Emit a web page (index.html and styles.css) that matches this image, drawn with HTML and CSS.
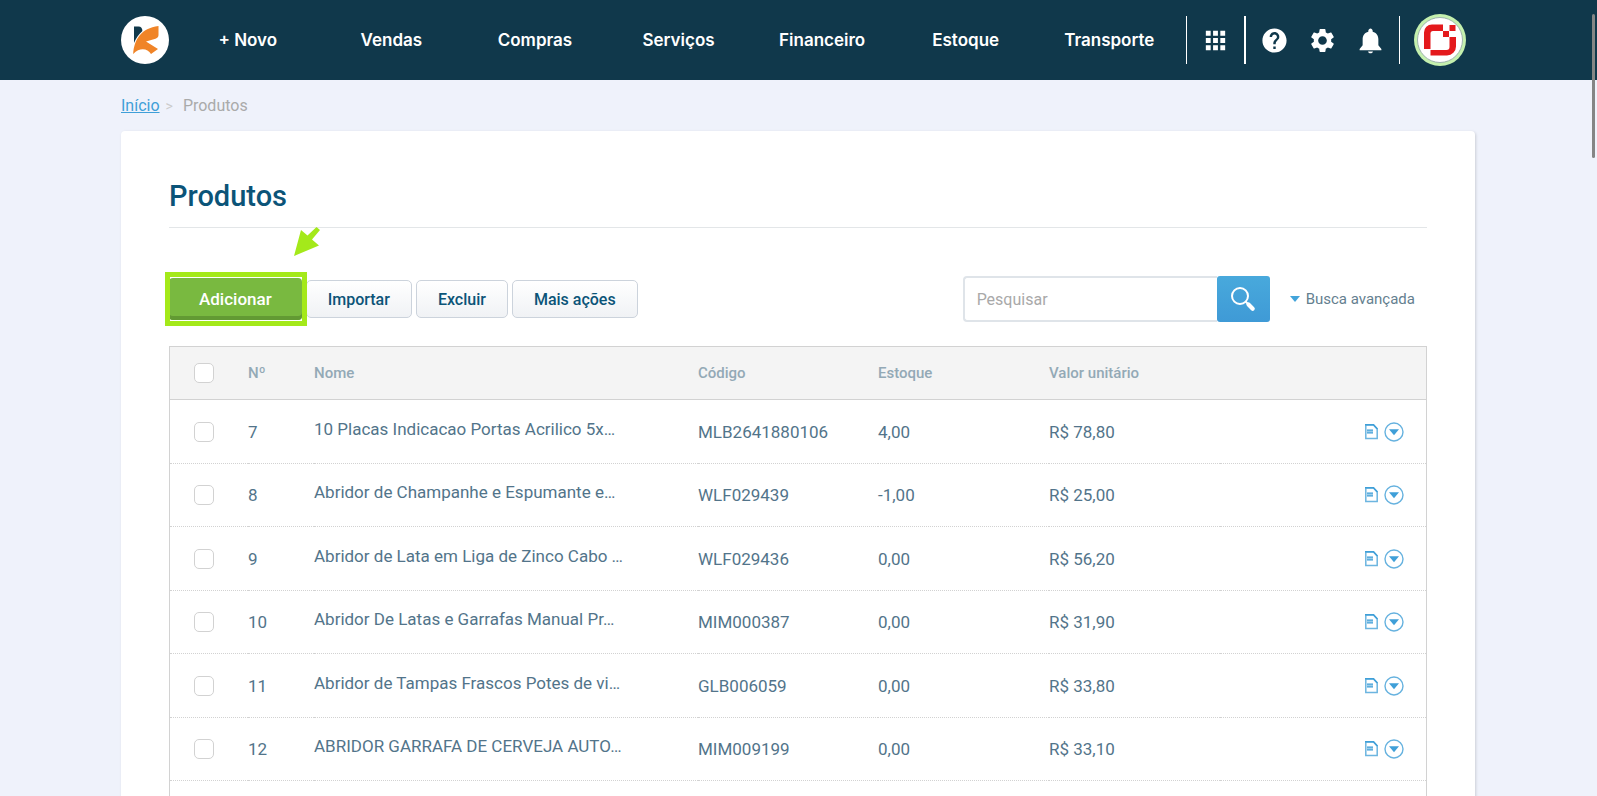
FILE: index.html
```html
<!DOCTYPE html>
<html lang="pt-BR">

<head>
    <meta charset="UTF-8">
    <meta name="viewport" content="width=device-width, initial-scale=1.0">
    <title>Produtos</title>
    <link rel="stylesheet" href="styles.css">
</head>

<body>
    <!-- icons used by every table row -->
    <svg class="sprite" aria-hidden="true">
        <symbol id="doc" viewBox="0 0 13 16">
            <path d="M.8 1h7.700l3.700 4v9.500H.8z" fill="#fff" stroke="#6cb5e0" stroke-width="1.500" />
            <path d="M0 .8h8.500l4 4.200" fill="none" stroke="#3f9fd8" stroke-width="1.500" />
            <path d="M2 5h6v5H2z" fill="#9ccdeb" />
            <path d="M2 6.500h6M2 8.500h6" stroke="#5fafde" stroke-width="1" />
        </symbol>
        <symbol id="more" viewBox="0 0 20 20">
            <circle cx="10" cy="10" r="9" fill="none" stroke="#66b2df" stroke-width="1.400" />
            <path d="M5 7.200h10l-5 6z" fill="#3f9fd8" />
        </symbol>
    </svg>

    <header class="topbar">
        <a class="logo" href="#" aria-label="Início">
            <svg viewBox="0 0 48 48">
                <circle cx="24" cy="24" r="24" fill="#fff" />
                <path d="M13 10.500h4.500c2.500 0 4 2 3.900 4.500C18 18 15 22 13 27z" fill="#10384b" />
                <path d="M37.500 10v9c0 2-1 3-3 3.700L25 25.500l12 7.500-7 5c-3.500-5.500-11-7-17.800 0C13 24 20 12 37.500 10z" fill="#f08427" />
            </svg>
        </a>
        <nav class="menu">
            <a href="#">+ Novo</a>
            <a href="#">Vendas</a>
            <a href="#">Compras</a>
            <a href="#">Serviços</a>
            <a href="#">Financeiro</a>
            <a href="#">Estoque</a>
            <a href="#">Transporte</a>
        </nav>
        <div class="tools">
            <button class="apps" type="button" aria-label="Aplicativos">
                <svg viewBox="0 0 24 24"><path d="M4 8h4V4H4v4zm6 12h4v-4h-4v4zm-6 0h4v-4H4v4zm0-6h4v-4H4v4zm6 0h4v-4h-4v4zm6-10v4h4V4h-4zm-6 4h4V4h-4v4zm6 6h4v-4h-4v4zm0 6h4v-4h-4v4z" /></svg>
            </button>
            <div class="group">
                <button type="button" aria-label="Ajuda">
                    <svg viewBox="0 0 24 24"><path d="M12 2C6.480 2 2 6.480 2 12s4.480 10 10 10 10-4.480 10-10S17.520 2 12 2zm1 17h-2v-2h2v2zm2.070-7.750l-.9.920C13.450 12.900 13 13.500 13 15h-2v-.5c0-1.100.45-2.100 1.170-2.830l1.240-1.260c.37-.36.59-.86.59-1.410 0-1.100-.9-2-2-2s-2 .9-2 2H8c0-2.210 1.790-4 4-4s4 1.790 4 4c0 .88-.36 1.680-.93 2.250z" /></svg>
                </button>
                <button type="button" aria-label="Configurações">
                    <svg viewBox="0 0 24 24"><path d="M19.140 12.940c.04-.3.06-.61.06-.94 0-.32-.02-.64-.07-.94l2.030-1.580c.18-.14.23-.41.12-.61l-1.920-3.320c-.12-.22-.37-.29-.59-.22l-2.390.96c-.5-.38-1.030-.7-1.620-.94l-.36-2.540c-.04-.24-.24-.41-.48-.41h-3.840c-.24 0-.43.17-.47.41l-.36 2.540c-.59.24-1.130.57-1.620.94l-2.390-.96c-.22-.08-.47 0-.59.22L2.740 8.870c-.12.21-.08.47.12.61l2.030 1.580c-.05.3-.09.63-.09.94s.02.64.07.94l-2.030 1.580c-.18.14-.23.41-.12.61l1.920 3.320c.12.22.37.29.59.22l2.390-.96c.5.38 1.030.7 1.620.94l.36 2.540c.05.24.24.41.48.41h3.840c.24 0 .44-.17.47-.41l.36-2.540c.59-.24 1.130-.56 1.620-.94l2.390.96c.22.08.47 0 .59-.22l1.920-3.320c.12-.22.07-.47-.12-.61l-2.010-1.580zM12 15.600c-1.980 0-3.600-1.620-3.600-3.600s1.620-3.600 3.600-3.600 3.600 1.620 3.600 3.600-1.620 3.600-3.600 3.600z" /></svg>
                </button>
                <button type="button" aria-label="Notificações">
                    <svg viewBox="0 0 24 24"><path d="M12 22.500c1.100 0 2-.7 2-1.500h-4c0 .8.900 1.500 2 1.500zm6.500-6.500v-5c0-3.070-1.640-5.640-4.700-6.320V4c0-.83-.97-2-1.800-2s-1.800 1.170-1.800 2v.68C7.130 5.360 5.500 7.920 5.500 11v5L3 19v1h18v-1l-2.500-3z" /></svg>
                </button>
            </div>
            <a class="avatar" href="#" aria-label="Minha conta">
                <svg viewBox="0 0 52 52">
                    <circle cx="26" cy="26" r="26" fill="#c4f0ae" />
                    <circle cx="26" cy="26" r="22.500" fill="#fff" stroke="#9fb4ae" stroke-width="1" />
                    <path d="M29 10.500H18a8 8 0 0 0-8 8V35h6.500V19.500q0-2.500 2.500-2.500h10z" fill="#e4191c" />
                    <path d="M16.500 36v5.500H33a9 9 0 0 0 9-9V23h-6.500v10q0 3-3 3z" fill="#e4191c" />
                    <path d="M29 17h6v6h-6zM35.500 11h6v6h-6z" fill="#e4191c" />
                </svg>
            </a>
        </div>
    </header>

    <div class="breadcrumb">
        <a href="#">Início</a><span class="sep">&gt;</span><span>Produtos</span>
    </div>

    <main class="card">
        <h1>Produtos</h1>

        <div class="toolbar">
            <div class="actions">
                <div class="highlight">
                    <button class="btn-add" type="button">Adicionar</button>
                    <svg class="arrow" viewBox="0 0 26 29" aria-hidden="true"><path d="M0 29L7 3l6.500 5.500L22.500 0l3.500 3-8 9.500 7 6z" fill="#a4e91a" /></svg>
                </div>
                <button class="btn" type="button">Importar</button>
                <button class="btn" type="button">Excluir</button>
                <button class="btn" type="button">Mais ações</button>
            </div>
            <form class="search">
                <input type="text" placeholder="Pesquisar" aria-label="Pesquisar">
                <button type="button" aria-label="Buscar">
                    <svg viewBox="0 0 26 26">
                        <circle cx="10" cy="10" r="8" fill="none" stroke="#fff" stroke-width="2" />
                        <path d="M15.500 15.500l2 2" stroke="#fff" stroke-width="2" />
                        <path d="M18.500 18.500l4.200 4.200" stroke="#fff" stroke-width="4.200" stroke-linecap="round" />
                    </svg>
                </button>
                <a href="#">Busca avançada</a>
            </form>
        </div>

        <table class="products">
            <colgroup>
                <col class="col-check">
                <col class="col-num">
                <col class="col-name">
                <col class="col-code">
                <col class="col-stock">
                <col class="col-price">
                <col>
            </colgroup>
            <thead>
                <tr>
                    <th class="check"><input type="checkbox" aria-label="Selecionar todos"></th>
                    <th>Nº</th>
                    <th>Nome</th>
                    <th>Código</th>
                    <th>Estoque</th>
                    <th>Valor unitário</th>
                    <th></th>
                </tr>
            </thead>
            <tbody>
                <tr>
                    <td class="check"><input type="checkbox" aria-label="Selecionar 7"></td>
                    <td>7</td>
                    <td class="name">10 Placas Indicacao Portas Acrilico 5x…</td>
                    <td>MLB2641880106</td>
                    <td>4,00</td>
                    <td>R$ 78,80</td>
                    <td><div class="icons"><button type="button" aria-label="Detalhes"><svg class="doc"><use href="#doc" /></svg></button><button type="button" aria-label="Opções"><svg class="more"><use href="#more" /></svg></button></div></td>
                </tr>
                <tr>
                    <td class="check"><input type="checkbox" aria-label="Selecionar 8"></td>
                    <td>8</td>
                    <td class="name">Abridor de Champanhe e Espumante e…</td>
                    <td>WLF029439</td>
                    <td>-1,00</td>
                    <td>R$ 25,00</td>
                    <td><div class="icons"><button type="button" aria-label="Detalhes"><svg class="doc"><use href="#doc" /></svg></button><button type="button" aria-label="Opções"><svg class="more"><use href="#more" /></svg></button></div></td>
                </tr>
                <tr>
                    <td class="check"><input type="checkbox" aria-label="Selecionar 9"></td>
                    <td>9</td>
                    <td class="name">Abridor de Lata em Liga de Zinco Cabo …</td>
                    <td>WLF029436</td>
                    <td>0,00</td>
                    <td>R$ 56,20</td>
                    <td><div class="icons"><button type="button" aria-label="Detalhes"><svg class="doc"><use href="#doc" /></svg></button><button type="button" aria-label="Opções"><svg class="more"><use href="#more" /></svg></button></div></td>
                </tr>
                <tr>
                    <td class="check"><input type="checkbox" aria-label="Selecionar 10"></td>
                    <td>10</td>
                    <td class="name">Abridor De Latas e Garrafas Manual Pr…</td>
                    <td>MIM000387</td>
                    <td>0,00</td>
                    <td>R$ 31,90</td>
                    <td><div class="icons"><button type="button" aria-label="Detalhes"><svg class="doc"><use href="#doc" /></svg></button><button type="button" aria-label="Opções"><svg class="more"><use href="#more" /></svg></button></div></td>
                </tr>
                <tr>
                    <td class="check"><input type="checkbox" aria-label="Selecionar 11"></td>
                    <td>11</td>
                    <td class="name">Abridor de Tampas Frascos Potes de vi…</td>
                    <td>GLB006059</td>
                    <td>0,00</td>
                    <td>R$ 33,80</td>
                    <td><div class="icons"><button type="button" aria-label="Detalhes"><svg class="doc"><use href="#doc" /></svg></button><button type="button" aria-label="Opções"><svg class="more"><use href="#more" /></svg></button></div></td>
                </tr>
                <tr>
                    <td class="check"><input type="checkbox" aria-label="Selecionar 12"></td>
                    <td>12</td>
                    <td class="name">ABRIDOR GARRAFA DE CERVEJA AUTO…</td>
                    <td>MIM009199</td>
                    <td>0,00</td>
                    <td>R$ 33,10</td>
                    <td><div class="icons"><button type="button" aria-label="Detalhes"><svg class="doc"><use href="#doc" /></svg></button><button type="button" aria-label="Opções"><svg class="more"><use href="#more" /></svg></button></div></td>
                </tr>
                <tr>
                    <td colspan="7"></td>
                </tr>
            </tbody>
        </table>
    </main>

    <div class="scroll-thumb"></div>
</body>

</html>
```
FILE: styles.css
```css
* {
    box-sizing: border-box;
    margin: 0;
    padding: 0;
}

html,
body {
    height: 100%;
    overflow: hidden;
}

body {
    background-color: #eff2fb;
    color: #52748a;
    font-family: Roboto, "Liberation Sans", sans-serif;
    font-size: 17px;
}

button,
input {
    font-family: inherit;
}

button {
    border: none;
    background: none;
    cursor: pointer;
}

svg {
    display: block;
}

.sprite {
    display: none;
}

/* top bar */
.topbar {
    display: flex;
    align-items: center;
    height: 80px;
    padding: 0 122px 0 121px;
    background-color: #10384b;
}

.logo svg {
    width: 48px;
    height: 48px;
}

.menu {
    display: flex;
    flex: 1;
    padding: 0 5px 0 7px;
}

.menu a {
    flex: 1 1 0;
    color: #fff;
    font-family: Inter, sans-serif;
    font-size: 17px;
    font-weight: 600;
    text-align: center;
    text-decoration: none;
}

.tools,
.group {
    display: flex;
    align-items: center;
    height: 48px;
}

.tools {
    border-left: 1px solid #fff;
}

.group {
    padding: 0 5px 0 4px;
    border-left: 2px solid #fff;
    border-right: 1px solid #fff;
}

.tools button {
    display: flex;
    justify-content: center;
    width: 48px;
    fill: #fff;
}

.tools .apps {
    width: 57px;
}

.tools button svg {
    width: 29px;
    height: 29px;
}

.avatar {
    margin: 0 9px 0 14px;
}

.avatar svg {
    width: 52px;
    height: 52px;
}

.breadcrumb {
    display: flex;
    align-items: center;
    height: 51px;
    padding: 0 121px;
    color: #aaa;
    font-size: 16px;
}

.breadcrumb a {
    color: #3f9fd8;
}

.breadcrumb .sep {
    padding: 0 10px 0 6px;
    color: #ccc;
    font-size: 14px;
}

.card {
    margin: 0 122px 0 121px;
    padding: 48px 48px 0;
    border-radius: 4px;
    background-color: #fff;
    box-shadow: 1px 1px 3px rgba(0, 0, 0, 0.15);
}

h1 {
    padding-bottom: 14px;
    border-bottom: 1px solid #e3e6e8;
    color: #0b5478;
    font-size: 29px;
    font-weight: 500;
    line-height: 34px;
}

.toolbar {
    display: flex;
    align-items: center;
    justify-content: space-between;
    padding: 48px 0 24px;
}

.actions {
    display: flex;
    align-items: center;
    gap: 4px;
}

.highlight {
    position: relative;
}

/* bright frame around the add button */
.highlight::after {
    content: "";
    position: absolute;
    z-index: 1;
    inset: -6px -5px -6px -4px;
    border: 5px solid #a4e91a;
    pointer-events: none;
}

.arrow {
    position: absolute;
    left: 125px;
    bottom: 64px;
    width: 26px;
    height: 29px;
}

.btn-add {
    display: block;
    height: 42px;
    padding: 0 30px;
    border-radius: 4px;
    background-color: #79b940;
    box-shadow: inset 0 -4px #629a33;
    color: #fff;
    font-size: 17px;
    font-weight: 500;
}

.btn {
    height: 38px;
    padding: 0 21px;
    border: 1px solid #ccd3dc;
    border-radius: 5px;
    background-image: linear-gradient(#fff, #f0f2f5);
    color: #0b5478;
    font-size: 16px;
    font-weight: 500;
}

.search {
    display: flex;
    align-items: center;
}

.search input {
    width: 254px;
    height: 46px;
    padding: 0 12px;
    border: 2px solid #dfe4e9;
    border-right: none;
    border-radius: 4px 0 0 4px;
    font-size: 16px;
}

.search input::placeholder {
    color: #a9a9a9;
}

.search button {
    display: flex;
    align-items: center;
    justify-content: center;
    width: 53px;
    height: 46px;
    border-radius: 3px;
    background-image: linear-gradient(#48a9dc, #3f9ad6);
}

.search button svg {
    width: 26px;
    height: 26px;
}

.search a {
    display: flex;
    align-items: center;
    gap: 6px;
    margin: 0 12px 0 20px;
    color: #64808f;
    font-size: 15px;
    text-decoration: none;
}

.search a::before {
    content: "";
    border: 5px solid transparent;
    border-top: 6px solid #43a4da;
    border-bottom: none;
}

/* product list */
.products {
    width: 100%;
    border: 1px solid #d2d2d2;
    border-collapse: separate;
    border-spacing: 0;
    table-layout: fixed;
}

.col-check {
    width: 78px;
}

.col-num {
    width: 66px;
}

.col-name {
    width: 384px;
}

.col-code {
    width: 180px;
}

.col-stock,
.col-price {
    width: 171px;
}

.products th {
    height: 53px;
    border-bottom: 1px solid #d2d2d2;
    background-color: #f4f4f4;
    color: #93a9b6;
    font-size: 15px;
    font-weight: 500;
    text-align: left;
}

.products td {
    height: 64px;
    border-bottom: 1px dotted #d2d2d2;
    font-size: 17px;
    white-space: nowrap;
}

.products tr:nth-child(even) td {
    height: 63px;
}

.products .name {
    padding-bottom: 6px;
}

.products .check {
    padding-left: 24px;
}

.products input {
    display: block;
    appearance: none;
    width: 20px;
    height: 20px;
    border: 1px solid #d2d2d2;
    border-radius: 5px;
    background-color: #fff;
}

.icons {
    display: flex;
    align-items: center;
    justify-content: flex-end;
    gap: 6px;
    padding-right: 22px;
}

.doc {
    width: 13px;
    height: 16px;
}

.more {
    width: 20px;
    height: 20px;
}

/* overlay scroll indicator */
.scroll-thumb {
    position: fixed;
    top: 14px;
    right: 2px;
    width: 3px;
    height: 144px;
    border-radius: 2px;
    background-color: #858585;
}
```
